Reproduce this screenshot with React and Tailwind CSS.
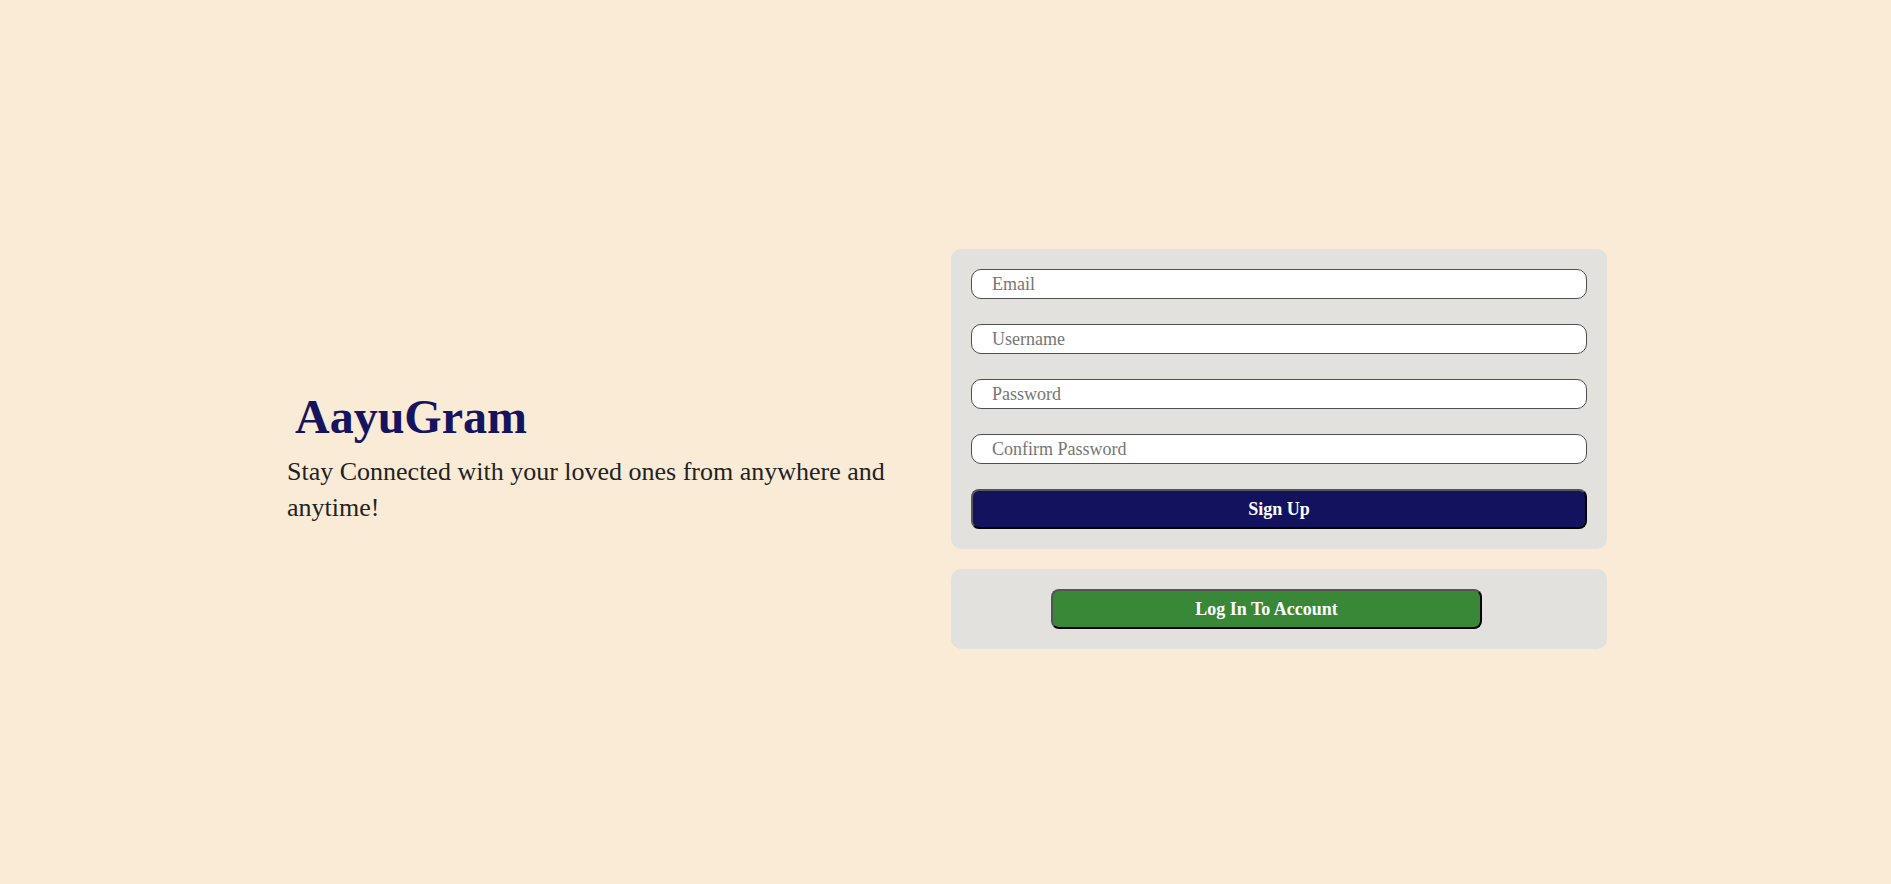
export default function App() {
  const font = { fontFamily: '"Liberation Serif", "Times New Roman", serif' };
  const inputCls =
    "block w-full h-[30px] rounded-[10px] border border-[#4f4f4f] bg-white pl-[20px] pr-3 text-[18px] leading-none text-[#333] placeholder:text-[#767676] outline-none";
  return (
    <div
      className="min-h-screen w-full bg-[#faebd7] flex items-center justify-center pt-[14px] pl-[3px]"
      style={font}
    >
      <div className="flex items-center">
        <div className="w-[620px] mt-[20px] mr-[44px]">
          <h1 className="pl-[8px] text-[48px] leading-[48px] font-bold text-[#17145f]">
            AayuGram
          </h1>
          <p className="mt-[13px] text-[26px] leading-[36px] text-[#222222]">
            Stay Connected with your loved ones from anywhere and anytime!
          </p>
        </div>
        <div className="w-[656px] flex flex-col gap-[20px]">
          <form
            className="bg-[#e2e1dd] rounded-[10px] p-[20px] flex flex-col gap-[25px]"
            onSubmit={(e) => e.preventDefault()}
          >
            <input className={inputCls} type="email" placeholder="Email" />
            <input className={inputCls} type="text" placeholder="Username" />
            <input className={inputCls} type="password" placeholder="Password" />
            <input className={inputCls} type="password" placeholder="Confirm Password" />
            <button
              type="submit"
              className="h-[40px] w-full rounded-[8px] border-2 border-t-[#555555] border-l-[#555555] border-b-black border-r-black bg-[#13125f] text-white text-[18px] font-bold"
            >
              Sign Up
            </button>
          </form>
          <div className="bg-[#e2e1dd] rounded-[10px] py-[20px] pl-[100px]">
            <button
              type="button"
              className="h-[40px] w-[431px] rounded-[8px] border-2 border-t-[#555555] border-l-[#555555] border-b-black border-r-black bg-[#388838] text-white text-[18px] font-bold"
            >
              Log In To Account
            </button>
          </div>
        </div>
      </div>
    </div>
  );
}
